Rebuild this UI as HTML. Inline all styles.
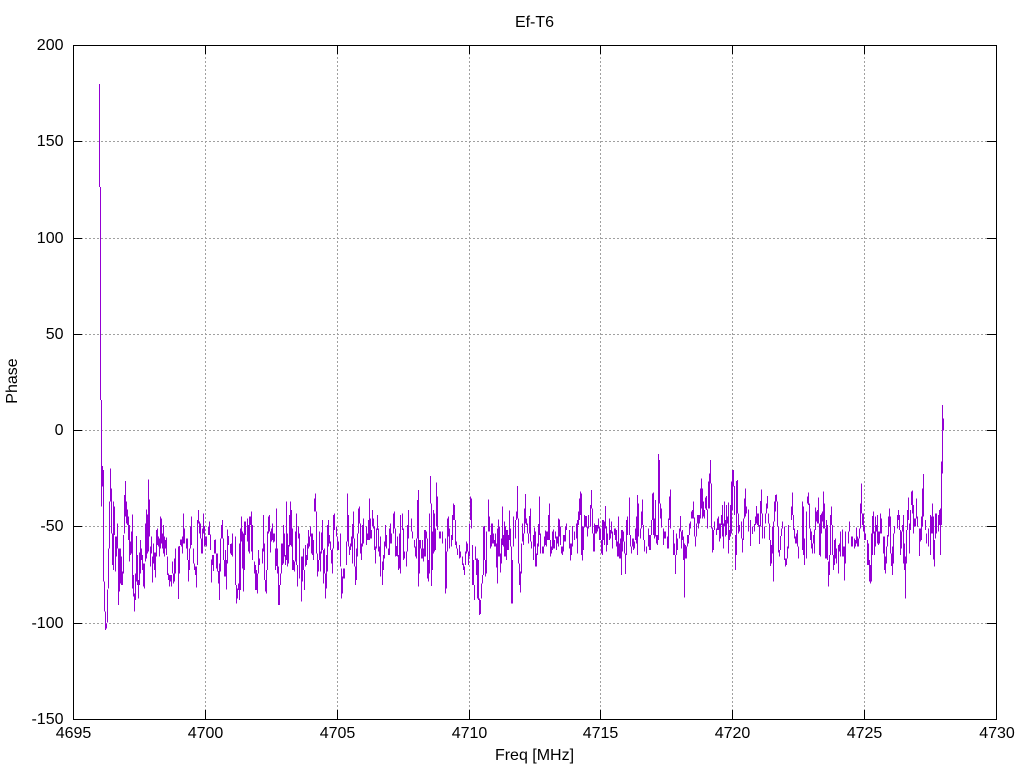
<!DOCTYPE html>
<html><head><meta charset="utf-8"><title>Ef-T6</title>
<style>html,body{margin:0;padding:0;background:#fff}svg{display:block}text{font-family:"Liberation Sans",sans-serif;font-size:16px;fill:#000}</style></head>
<body>
<svg width="1024" height="768" viewBox="0 0 1024 768" xmlns="http://www.w3.org/2000/svg">
<rect width="1024" height="768" fill="#fff"/>
<g shape-rendering="crispEdges" fill="none">
<path stroke="#a0a0a0" stroke-dasharray="2 2" d="M205.5 45V719M337.5 45V719M469.5 45V719M600.5 45V719M732.5 45V719M864.5 45V719M73 141.5H996M73 238.5H996M73 334.5H996M73 430.5H996M73 526.5H996M73 623.5H996"/>
<g stroke="#9400d3">
<path d="M99.5 84V187M100.5 187V400"/>
<path transform="translate(70.17,400) scale(.33333)" stroke-width="3" d="M94 0V320M97 198V260M100 210V545M103 545V635M106 635V690M109 670V685M112 568V668M115 445V565M118 305V445M121 205V305M124 265V400M127 400V495M130 305V510M133 320V405M136 410V515M139 410V470M142 370V445M145 445V615M148 445V575M151 445V550M154 470V555M157 515V555M160 405V520M163 285V400M166 243V350M169 305V370M172 328V375M175 350V420M178 375V485M181 425V465M184 395V460M187 343V565M190 525V590M193 580V635M196 520V600M199 408V545M202 465V555M205 540V595M208 458V555M211 420V520M214 445V480M217 465V510M220 490V560M223 490V565M226 370V485M229 328V475M232 343V460M235 238V455M238 298V410M241 440V500M244 410V460M247 470V548M250 430V490M253 458V510M256 458V533M259 390V470M262 385V435M265 410V440M268 415V470M271 350V445M274 355V430M277 400V445M280 375V460M283 410V470M286 420V445M289 412V465M292 470V525M295 520V540M298 525V560M301 525V545M304 525V560M307 485V520M310 520V550M313 475V545M316 445V520M325 440V597M328 438V520M331 418V435M334 418V440M337 410V460M340 340V430M343 385V430M349 415V445M352 415V480M355 480V545M358 445V510M361 380V445M364 350V435M370 445V490M373 490V510M376 500V525M379 500V563M382 360V495M385 330V370M388 365V400M391 370V415M394 415V460M397 385V460M400 340V400M403 378V440M406 410V435M409 410V440M415 380V405M418 365V405M421 403V450M424 478V548M427 465V495M430 465V513M433 420V460M436 418V460M439 460V505M442 460V515M445 513V550M448 490V600M451 415V515M454 375V415M457 360V415M460 415V480M463 480V530M466 450V530M469 480V568M472 388V490M475 408V435M481 432V460M484 430V465M487 400V470M496 410V555M499 555V610M502 565V595M505 550V570M508 430V600M511 385V570M514 350V425M517 395V505M520 400V575M523 365V510M526 365V405M532 355V425M535 375V455M538 350V460M541 350V375M544 335V455M547 375V480M553 485V520M556 495V570M559 510V570M562 520V580M565 450V520M568 475V495M577 445V490M580 345V455M583 430V540M586 540V575M589 510V580M592 395V510M595 350V400M598 345V395M601 395V458M604 385V425M607 370V420M610 400V428M613 400V425M616 445V510M619 325V498M622 445V520M625 500V615M628 555V615M631 520V555M634 430V520M637 430V495M640 375V490M643 400V470M646 465V495M649 305V480M652 400V500M655 435V490M658 345V440"/>
<path transform="translate(290.17,460) scale(.33333)" stroke-width="3" d="M1 125V255M4 150V260M7 205V330M10 300V330M13 305V335M16 215V305M19 160V315M22 315V380M25 200V235M28 220V355M34 290V425M37 290V365M40 265V330M43 330V390M46 255V320M49 285V315M52 250V300M55 210V265M58 230V260M61 200V230M64 220V280M67 220V285M70 240V300M73 115V155M76 100V155M79 155V280M82 280V350M85 300V335M88 215V300M91 275V335M94 218V280M97 180V270M100 270V370M103 265V340M106 340V415M109 285V385M112 195V335M115 180V260M118 225V250M121 245V270M124 270V310M127 265V340M130 165V265M133 160V210M139 200V230M142 230V270M145 245V270M151 220V320M154 325V415M157 350V400M160 325V355M163 325V355M169 245V315M172 100V245M175 165V260M178 260V285M181 250V270M184 230V260M187 192V310M190 155V235M193 235V320M196 320V375M199 265V360M202 220V290M205 145V220M208 140V190M211 190V280M214 250V300M217 195V260M220 175V250M229 200V255M232 220V240M235 180V240M238 115V240M241 175V235M244 210V235M247 150V200M250 175V205M253 200V270M256 260V310M259 205V265M262 165V210M265 205V275M268 260V290M271 230V350M277 305V375M280 285V330M283 245V295M286 195V260M289 225V265M295 265V285M298 205V285M301 190V250M304 220V250M310 160V220M313 155V205M316 205V290M319 258V288M322 230V290M325 285V330M328 220V325M331 165V340M337 160V210M340 205V300M343 275V295M349 275V320M352 195V275M355 150V235M364 175V215M367 215V235M373 240V262M376 260V290M379 235V295M382 120V235M385 90V380M388 240V340M391 240V265M394 265V295M397 240V295M400 265V305M403 210V290M406 210V290M409 215V235M412 235V355M415 300V365M418 160V340M421 48V130M424 130V378M427 215V330M430 150V280M433 160V275M436 205V270M439 68V200M442 110V210M448 215V235M451 215V235M457 215V250M466 235V400M469 275V385M472 175V275M475 170V230M478 205V265M484 225V260M487 165V240M490 130V180M493 135V180M496 180V255M499 245V265M502 265V285M508 255V295M511 275V292M517 290V315M520 310V330M523 320V345M526 275V315M529 245V280M532 250V275M535 275V315M538 190V290M541 110V180M544 115V205M547 255V375M550 300V375M553 375V420M556 260V300M559 295V345M562 295V415M565 300V420M568 415V465M571 420V462M574 370V415M577 345V370M580 200V345M583 198V300M586 300V350M589 215V340M595 118V215M598 170V215M601 225V265M604 190V260M607 190V250M610 220V250M613 240V260M616 220V260M619 250V322M622 205V370M625 178V290M628 200V290M631 280V338M634 235V310M637 140V255M640 225V260M643 185V290M646 200V290M649 210V300M652 210V270M655 225V270M658 152V240"/>
<path transform="translate(510.17,440) scale(.33333)" stroke-width="3" d="M1 265V320M4 320V490M7 360V490M10 230V320M16 240V295M19 215V240M22 138V235M25 235V370M28 370V435M31 395V458M34 310V400M37 250V305M40 280V315M43 205V280M46 162V250M49 235V255M52 250V280M55 280V310M58 228V280M61 205V305M64 305V325M70 285V360M73 262V320M76 275V380M79 340V380M82 310V345M85 252V320M88 170V285M91 280V340M97 320V340M100 320V340M103 290V320M106 272V315M109 275V320M112 275V300M115 225V300M118 190V300M121 300V350M124 320V340M127 275V330M130 268V325M133 300V325M136 275V295M139 290V330M142 290V310M145 235V320M148 238V290M151 260V315M154 320V340M157 320V345M160 285V335M163 285V305M166 260V305M169 250V270M178 270V325M181 310V362M184 310V345M187 258V320M193 275V300M199 250V295M202 240V340M205 215V255M208 175V240M211 155V225M214 160V345M217 260V362M220 260V330M223 225V262M226 228V260M229 228V262M232 260V290M235 225V265M241 195V260M244 150V205M247 205V280M250 280V335M253 250V335M256 255V280M259 255V280M262 255V275M265 235V265M268 260V300M271 265V300M274 300V340M277 240V345M280 240V300M283 245V315M286 198V265M289 260V335M292 280V315M298 235V300M301 270V295M304 245V280M307 275V325M313 265V285M316 265V300M319 270V320M322 305V350M325 230V350M328 310V355M331 295V355M334 270V405M337 270V335M340 275V305M343 305V340M346 340V402M349 240V345M352 230V285M358 172V285M361 285V320M364 320V340M367 295V320M370 295V330M373 305V325M376 265V300M379 230V310M382 165V345M385 190V290M391 265V295M394 215V265M397 178V255M400 255V300M403 300V335M409 320V340M415 265V320M418 285V330M421 285V330M424 240V285M427 160V240M430 158V285M433 235V295M436 180V290M439 285V310M442 285V315M445 42V300M448 60V190M451 190V235M454 205V262M460 265V315M463 275V295M466 275V295M472 290V325M475 235V325M478 170V240M481 148V265M490 270V345M493 310V345M496 345V402M499 280V345M502 295V330M508 265V295M511 228V275M514 275V325M517 270V300M520 290V360M523 310V473M526 315V355M529 320V355M532 285V320M535 285V310M538 250V285M541 245V265M544 215V235M547 210V235M550 185V235M553 232V290M556 290V320M559 250V290M562 225V250M565 225V265M568 225V250M571 145V235M574 115V205M577 145V235M580 185V230M583 210V235M586 172V205M589 168V210M592 208V265M595 125V205M598 100V205M601 60V130M604 130V265M607 262V338M610 270V330M613 245V270M619 265V285M622 235V270M625 230V270M628 250V305M631 250V295M634 225V255M637 195V290M640 250V325M643 185V260M646 240V290M649 195V285M652 230V250M655 188V340M658 270V300"/>
<path transform="translate(730.17,400) scale(.33333)" stroke-width="3" d="M1 315V410M4 245V400M7 210V330M10 210V260M13 258V345M16 405V510M19 243V465M22 240V340M25 340V400M28 375V395M34 365V415M37 415V458M40 355V420M43 295V355M46 265V350M49 320V340M55 328V395M61 360V438M67 380V402M73 372V395M76 350V375M79 318V370M82 340V375M85 340V380M88 375V432M91 303V380M94 268V340M97 340V415M103 380V415M106 340V370M109 310V340M112 288V325M115 340V370M118 370V420M121 420V498M124 435V490M127 380V460M130 365V545M133 305V365M136 285V335M139 283V305M142 305V380M145 380V458M148 450V470M151 408V450M154 385V408M157 365V385M163 380V480M166 475V500M169 475V495M172 440V475M175 375V445M184 320V360M187 278V345M190 345V390M193 385V415M196 410V430M199 400V430M202 390V440M205 440V475M217 305V450M220 320V465M223 415V495M229 335V475M232 290V310M235 278V315M238 310V385M241 385V420M244 395V445M247 430V460M250 405V430M253 388V460M256 322V390M259 335V365M262 330V370M265 292V370M268 370V465M271 345V470M274 340V400M277 335V365M280 275V385M283 310V385M286 385V475M289 360V475M292 375V480M295 485V560M298 465V525M301 345V465M304 320V375M307 375V465M310 465V510M313 420V495M316 415V475M319 445V490M325 435V520M328 430V455M331 395V470M337 388V470M340 440V470M343 440V542M346 395V490M355 395V430M358 365V395M364 410V440M367 410V440M373 415V445M376 420V440M379 383V430M382 410V440M385 415V440M388 385V415M391 310V385M394 250V340M397 340V375M400 340V395M403 375V420M406 400V420M412 420V495M415 430V495M418 480V545M421 495V550M424 400V545M427 348V465M430 335V400M433 395V465M436 350V440M439 375V395M442 345V430M445 395V435M448 395V430M451 340V400M454 355V400M460 410V460M463 410V510M466 470V520M469 440V490M472 405V440M475 350V410M478 325V380M481 350V460M484 460V498M487 440V525M490 400V490M493 378V400M502 345V385M505 330V360M508 345V390M511 390V465M514 395V445M517 375V395M520 345V490M523 430V510M526 470V595M529 390V490M532 330V390M535 292V360M538 370V460M541 330V390M544 275V315M547 272V340M550 315V400M553 355V380M556 355V380M559 295V355M562 350V380M568 385V468M571 385V425M574 350V420M577 265V380M580 222V350M586 360V390M589 400V430M595 385V440M601 345V465M604 350V400M607 310V400M610 350V478M613 420V500M616 340V415M619 340V400M625 345V395M628 330V375M631 325V465M634 185V375M637 15V220M640 55V92"/>
</g>
<path stroke="#000" d="M73.5 45.5H996.5V719.5H73.5ZM73 141.5H82M987 141.5H996M73 238.5H82M987 238.5H996M73 334.5H82M987 334.5H996M73 430.5H82M987 430.5H996M73 526.5H82M987 526.5H996M73 623.5H82M987 623.5H996M205.5 45V54M205.5 710V719M337.5 45V54M337.5 710V719M469.5 45V54M469.5 710V719M600.5 45V54M600.5 710V719M732.5 45V54M732.5 710V719M864.5 45V54M864.5 710V719"/>
</g>
<g text-anchor="end">
<text x="63.5" y="50">200</text><text x="63.5" y="146">150</text><text x="63.5" y="243">100</text><text x="63.5" y="339">50</text><text x="63.5" y="435">0</text><text x="63.5" y="531">-50</text><text x="63.5" y="628">-100</text><text x="63.5" y="724">-150</text>
</g>
<g text-anchor="middle">
<text x="73.5" y="738">4695</text><text x="205.5" y="738">4700</text><text x="337.5" y="738">4705</text><text x="469.5" y="738">4710</text><text x="600.5" y="738">4715</text><text x="732.5" y="738">4720</text><text x="864.5" y="738">4725</text><text x="997" y="738">4730</text>
<text x="534.5" y="760">Freq [MHz]</text>
<text x="534.5" y="27">Ef-T6</text>
<text transform="translate(17,381) rotate(-90)">Phase</text>
</g>
</svg>
</body></html>
